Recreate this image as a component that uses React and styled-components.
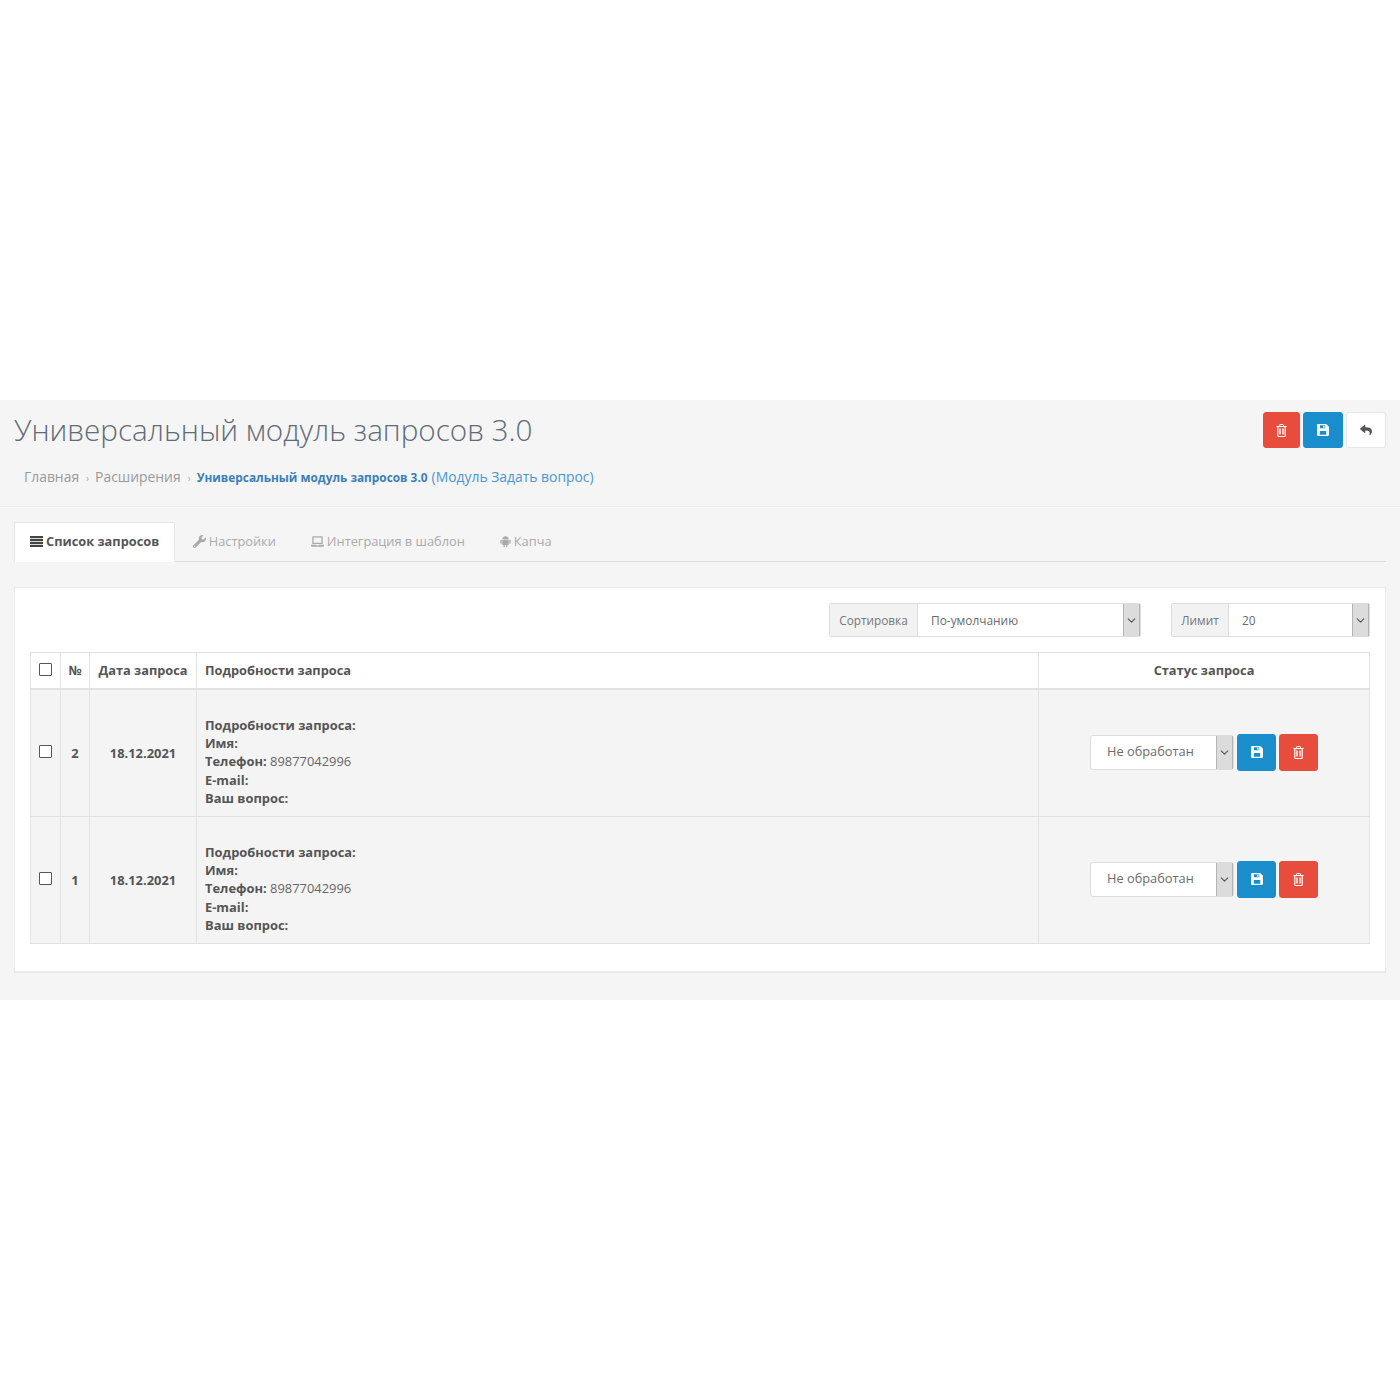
import React from "react";
import styled, { createGlobalStyle } from "styled-components";
import { FaReply, FaWrench, FaLaptop } from "react-icons/fa";
import { ChevronDown } from "lucide-react";

const Global = createGlobalStyle`
  html, body { margin: 0; padding: 0; background: #fff; }
  body { font-family: "Open Sans", "Noto Sans", sans-serif; color: #666; font-size: 13px; }
`;

const Page = styled.div`
  margin-top: 400px;
  height: 600px;
  background: #f5f5f5;
  box-sizing: border-box;
`;
const Header = styled.header`
  height: 107px;
  box-sizing: border-box;
  border-bottom: 1px solid #ebebeb;
  padding: 12px 14px 0;
`;
const TitleRow = styled.div`
  display: flex;
  justify-content: space-between;
  align-items: flex-start;
`;
const Title = styled.h1`
  margin: 0;
  font-size: 29.65px;
  font-weight: 300;
  line-height: 36px;
  color: #5f6b78;
`;
const Actions = styled.div`
  display: flex;
  gap: 3px;
`;
const Btn = styled.div`
  width: ${p => p.$w || 39}px;
  height: 36px;
  border-radius: 3px;
  box-sizing: border-box;
  display: flex;
  align-items: center;
  justify-content: center;
  font-size: 12px;
  background: ${p => p.$bg};
  color: ${p => p.$fg || "#fff"};
  border: 1px solid ${p => p.$bd || p.$bg};
`;
const Crumbs = styled.nav`
  display: flex;
  align-items: baseline;
  margin: 19px 0 0 10px;
  font-size: 13.9px;
  line-height: 20px;
  color: #999;
`;
const Sep = styled.span`
  margin: 0 6px 0 7px;
  font-size: 10px;
  color: #aaa;
`;
const CrumbStrong = styled.b`
  color: #3a7fb8;
  font-size: 11.85px;
  font-weight: 700;
`;
const CrumbLink = styled.span`
  color: #4a96d2;
  margin-left: 4px;
`;
const Tabs = styled.div`
  display: flex;
  margin: 15px 14px 0;
  height: 40px;
  box-sizing: border-box;
  border-bottom: 1px solid #dedede;
`;
const Tab = styled.div`
  height: 40px;
  box-sizing: border-box;
  display: flex;
  align-items: center;
  gap: 3px;
  padding: 0 ${p => p.$active ? "15px" : "16.500px"} 3px;
  font-size: 12.8px;
  font-weight: ${p => p.$active ? 700 : 400};
  color: ${p => p.$active ? "#555" : "#aaa"};
  background: ${p => p.$active ? "#fff" : "transparent"};
  border: 1px solid ${p => p.$active ? "#e8e8e8" : "transparent"};
  border-bottom: none;
  svg { font-size: 13px; color: ${p => p.$active ? "#444" : "#aaa"}; }
`;
const Panel = styled.section`
  margin: 25px 14px 0;
  height: 386px;
  box-sizing: border-box;
  background: #fff;
  border: 1px solid #ebebeb;
  border-bottom-width: 2px;
  padding: 15px;
`;
const Toolbar = styled.div`
  display: flex;
  justify-content: flex-end;
  gap: 30px;
  height: 34px;
`;
const Group = styled.div`
  display: flex;
  width: ${p => p.$w}px;
  height: 34px;
  box-sizing: border-box;
  border: 1px solid #dcdcdc;
  border-radius: 2px;
`;
const Addon = styled.div`
  width: ${p => p.$w}px;
  background: #f2f2f2;
  border-right: 1px solid #dcdcdc;
  display: flex;
  align-items: center;
  justify-content: center;
  font-size: 11.8px;
  color: #777;
`;
const SelectValue = styled.div`
  flex: 1;
  display: flex;
  align-items: center;
  padding-left: ${p => p.$pad || 13}px;
  padding-bottom: ${p => p.$lift || 0}px;
  font-size: ${p => p.$size || 11.9}px;
  font-weight: 400;
  color: #6b6b6b;
  background: #fff;
  border-radius: 3px 0 0 3px;
`;
const Arrow = styled.div`
  width: 15px;
  flex: none;
  background: #dcdcdc;
  border-left: 1px solid #b5b5b5;
  border-right: 1px solid #b5b5b5;
  display: flex;
  align-items: center;
  justify-content: center;
  color: #555;
`;
const Table = styled.table`
  border-collapse: collapse;
  table-layout: fixed;
  width: 1339px;
  margin-top: 15px;
  font-size: 12.9px;
  color: #555;
`;
const Th = styled.th`
  height: 34px;
  padding: 0 0 1px;
  border: 1px solid #e2e2e2;
  border-bottom-width: 2px;
  background: #fff;
  font-weight: 700;
  font-size: 12.8px;
  color: #555;
  text-align: ${p => p.$left ? "left" : "center"};
  padding-left: ${p => p.$left ? "8px" : "0"};
`;
const Td = styled.td`
  height: 126px;
  padding: 0;
  border: 1px solid #e2e2e2;
  background: #f4f4f4;
  font-weight: 700;
  text-align: center;
  vertical-align: middle;
`;
const DetailCell = styled(Td)`
  text-align: left;
  padding: 17px 0 0 8px;
  height: 109px;
  line-height: 18.3px;
  span { font-weight: 400; color: #666; }
`;
const Check = styled.i`
  display: inline-block;
  width: 11px;
  height: 11px;
  vertical-align: middle;
  border: 1px solid #555;
  background: #fff;
  border-radius: 1px;
  position: relative;
  top: ${p => p.$top || 0}px;
`;
const StatusWrap = styled.div`
  display: flex;
  justify-content: center;
  align-items: center;
  gap: 3px;
  padding-bottom: 2px;
`;
const StatusSelect = styled.div`
  width: 144px;
  height: 35px;
  box-sizing: border-box;
  display: flex;
  border: 1px solid #dcdcdc;
  border-radius: 3px;
  background: #fff;
`;
const SmallBtn = styled(Btn)`
  height: 37px;
`;

const TrashIcon = () => (
  <svg width="11" height="13" viewBox="0 0 11 13" fill="none" stroke="currentColor">
    <path d="M3.500 2V1.200c0-.4.3-.7.7-.7h2.600c.4 0 .7.3.7.7V2" />
    <path d="M.5 2.500h10" strokeWidth="1.200" />
    <path d="M1.800 2.500v9.200c0 .5.3.8.8.8h5.800c.5 0 .8-.3.8-.8V2.500" strokeWidth="1.200" />
    <path d="M4 4.500v6M7 4.500v6" strokeWidth="1.400" />
  </svg>
);
const SaveIcon = () => (
  <svg width="12" height="12" viewBox="0 0 12 12" fill="currentColor" fillRule="evenodd">
    <path d="M1.200 0h8L12 2.800v8c0 .7-.5 1.200-1.200 1.200H1.200C.5 12 0 11.500 0 10.800V1.200C0 .5.500 0 1.200 0ZM3 1.200V4.300h5.300V1.200ZM6.200 1.700h1.400v2H6.200ZM2.800 7v3.800h6.400V7Z" />
  </svg>
);
const ListIcon = () => (
  <svg width="13" height="11" viewBox="0 0 13 11" fill="currentColor">
    <rect x="0" y="0" width="13" height="2.200" />
    <rect x="0" y="3" width="13" height="2.200" />
    <rect x="0" y="6" width="13" height="2.200" />
    <rect x="0" y="9" width="13" height="2" />
  </svg>
);
const AndroidIcon = () => (
  <svg width="11" height="13" viewBox="0 0 12 13" fill="currentColor">
    <path d="M2.500 4C2.700 2 4.200.8 6 .8S9.300 2 9.500 4Z" />
    <rect x="2.500" y="4.600" width="7" height="5.600" rx=".8" />
    <rect x=".4" y="4.600" width="1.500" height="4.400" rx=".75" />
    <rect x="10.100" y="4.600" width="1.500" height="4.400" rx=".75" />
    <rect x="3.800" y="9.500" width="1.500" height="3.200" rx=".75" />
    <rect x="6.700" y="9.500" width="1.500" height="3.200" rx=".75" />
  </svg>
);

const rows = [2, 1];

export default function App() {
  return (
    <>
      <Global />
      <Page>
        <Header>
          <TitleRow>
            <Title>Универсальный модуль запросов 3.0</Title>
            <Actions>
              <Btn $w={37} $bg="#e74c3c"><TrashIcon /></Btn>
              <Btn $w={40} $bg="#1a8dcd"><SaveIcon /></Btn>
              <Btn $w={40} $bg="#fff" $bd="#e8e8e8" $fg="#555"><FaReply /></Btn>
            </Actions>
          </TitleRow>
          <Crumbs>
            Главная<Sep>›</Sep>Расширения<Sep>›</Sep>
            <CrumbStrong>Универсальный модуль запросов 3.0</CrumbStrong>
            <CrumbLink>(Модуль Задать вопрос)</CrumbLink>
          </Crumbs>
        </Header>
        <Tabs>
          <Tab $active><ListIcon />Список запросов</Tab>
          <Tab><FaWrench />Настройки</Tab>
          <Tab><FaLaptop />Интеграция в шаблон</Tab>
          <Tab><AndroidIcon />Капча</Tab>
        </Tabs>
        <Panel>
          <Toolbar>
            <Group $w={312}>
              <Addon $w={87}>Сортировка</Addon>
              <SelectValue>По-умолчанию</SelectValue>
              <Arrow><ChevronDown size={13} /></Arrow>
            </Group>
            <Group $w={199}>
              <Addon $w={56}>Лимит</Addon>
              <SelectValue>20</SelectValue>
              <Arrow><ChevronDown size={13} /></Arrow>
            </Group>
          </Toolbar>
          <Table>
            <colgroup>
              <col width="30" />
              <col width="29" />
              <col width="107" />
              <col width="842" />
              <col width="331" />
            </colgroup>
            <thead>
              <tr>
                <Th><Check $top={-2} /></Th>
                <Th>№</Th>
                <Th>Дата запроса</Th>
                <Th $left>Подробности запроса</Th>
                <Th>Статус запроса</Th>
              </tr>
            </thead>
            <tbody>
              {rows.map(n => (
                <tr key={n}>
                  <Td><Check $top={-3} /></Td>
                  <Td>{n}</Td>
                  <Td>18.12.2021</Td>
                  <DetailCell>
                    Подробности запроса:<br />
                    Имя:<br />
                    Телефон: <span>89877042996</span><br />
                    E-mail:<br />
                    Ваш вопрос:
                  </DetailCell>
                  <Td>
                    <StatusWrap>
                      <StatusSelect>
                        <SelectValue $pad={16} $size={12.8} $lift={2}>Не обработан</SelectValue>
                        <Arrow><ChevronDown size={13} /></Arrow>
                      </StatusSelect>
                      <SmallBtn $bg="#1a8dcd"><SaveIcon /></SmallBtn>
                      <SmallBtn $bg="#e74c3c"><TrashIcon /></SmallBtn>
                    </StatusWrap>
                  </Td>
                </tr>
              ))}
            </tbody>
          </Table>
        </Panel>
      </Page>
    </>
  );
}
